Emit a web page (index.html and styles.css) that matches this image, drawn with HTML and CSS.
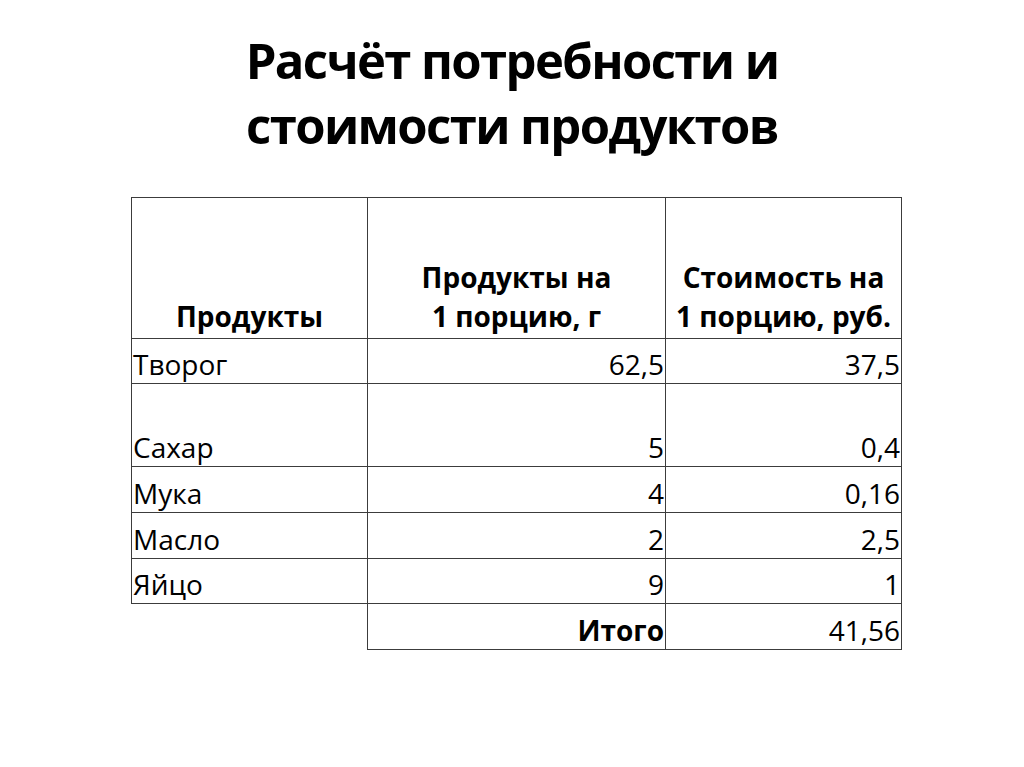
FILE: index.html
```
<!DOCTYPE html>
<html lang="ru">
<head>
<meta charset="utf-8">
<link rel="stylesheet" href="styles.css">
</head>
<body>
<div class="slide">
  <h1 class="title">Расчёт потребности и<br>стоимости продуктов</h1>
  <table class="calc">
    <tr class="head">
      <th>Продукты</th>
      <th>Продукты на<br>1 порцию, г</th>
      <th>Стоимость на<br>1 порцию, руб.</th>
    </tr>
    <tr class="row short"><td class="name">Творог</td><td class="num">62,5</td><td class="num">37,5</td></tr>
    <tr class="row tall"><td class="name">Сахар</td><td class="num">5</td><td class="num">0,4</td></tr>
    <tr class="row"><td class="name">Мука</td><td class="num">4</td><td class="num">0,16</td></tr>
    <tr class="row"><td class="name">Масло</td><td class="num">2</td><td class="num">2,5</td></tr>
    <tr class="row short"><td class="name">Яйцо</td><td class="num">9</td><td class="num">1</td></tr>
    <tr class="row total"><td class="empty"></td><td class="num bold">Итого</td><td class="num">41,56</td></tr>
  </table>
</div>
</body>
</html>
```
FILE: styles.css
```
html, body {
  margin: 0;
  padding: 0;
  background: #ffffff;
}
.slide {
  width: 1024px;
  height: 767px;
  font-family: "Open Sans", "Liberation Sans", sans-serif;
  color: #000;
  display: flex;
  flex-direction: column;
  align-items: center;
}
.title {
  margin: 28px 0 0 0;
  font-size: 49px;
  font-weight: 700;
  line-height: 65px;
  text-align: center;
  letter-spacing: -1.6px;
}
.calc {
  align-self: flex-start;
  margin: 39px 0 0 131px;
  border-collapse: collapse;
  table-layout: fixed;
}
.calc th, .calc td {
  border: 1px solid #3c3c3c;
  padding: 0 1px 4px 1px;
  font-size: 28px;
  line-height: 29px;
  vertical-align: bottom;
}
.calc th:nth-child(1) { width: 233px; }
.calc th:nth-child(2) { width: 295px; }
.calc th:nth-child(3) { width: 233px; }
.head th {
  height: 138px;
  font-weight: 700;
  text-align: center;
  line-height: 39px;
  padding-bottom: 2px;
}
.row td { height: 41px; }
.row.short td { height: 40px; }
.row.tall td { height: 78px; }
.name { text-align: left; }
.num { text-align: right; }
.bold { font-weight: 700; }
.calc td.empty {
  border-left: none;
  border-bottom: none;
}
```
